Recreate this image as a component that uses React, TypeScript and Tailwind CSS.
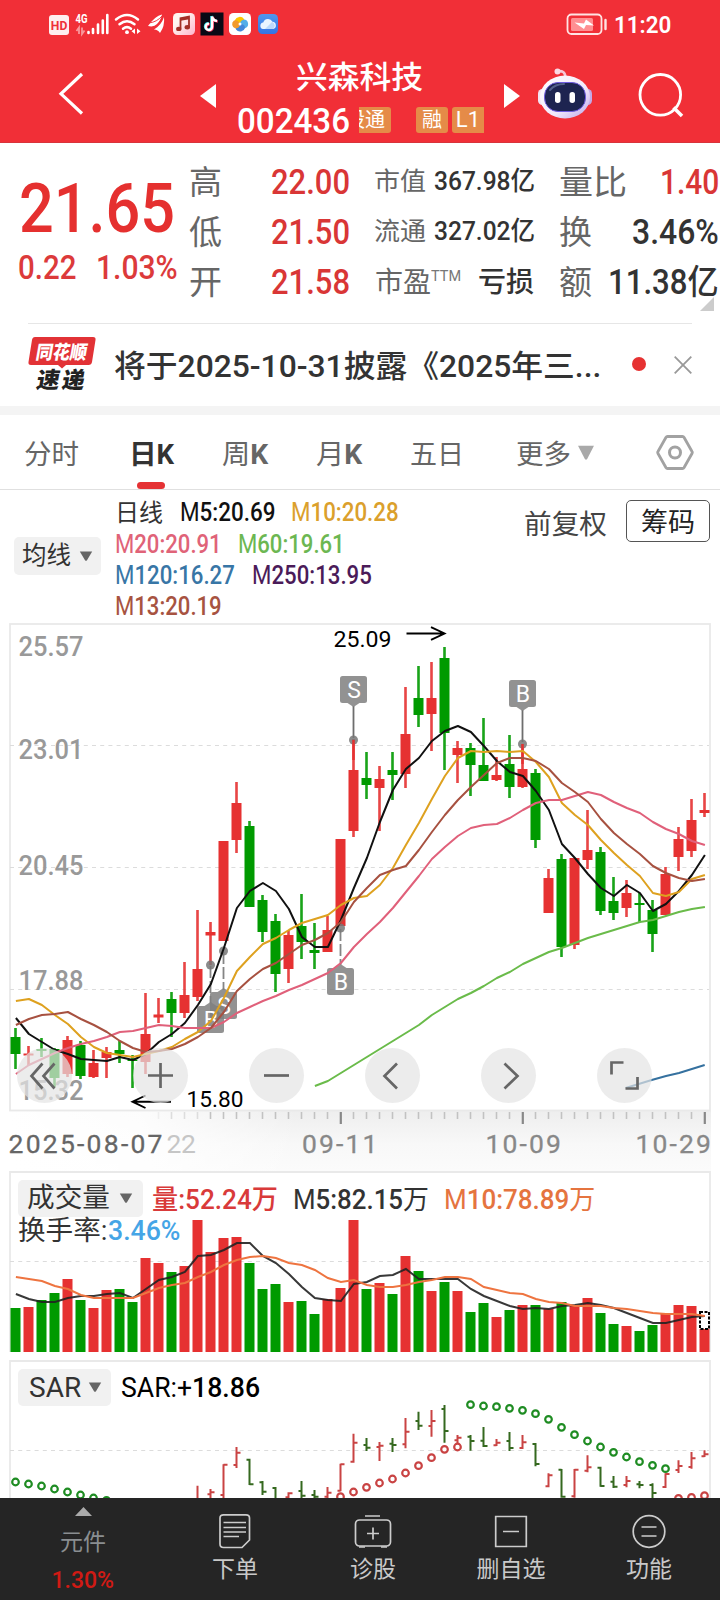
import { useLayoutEffect, useRef } from "react";
import type { ReactNode } from "react";
import clsx from "clsx";

/* ---------- text that keeps a fixed width, condensed like the DIN numerals ---------- */
function Fit({ w, className, children }: { w: number; className?: string; children: ReactNode }) {
  const inner = useRef<HTMLSpanElement>(null);
  useLayoutEffect(() => {
    const el = inner.current;
    if (el && el.offsetWidth > 0) el.style.transform = `scaleX(${w / el.offsetWidth})`;
  }, [w]);
  return (
    <span className={clsx("block shrink-0 whitespace-nowrap", className)} style={{ width: w }}>
      <span ref={inner} className="inline-block origin-left">{children}</span>
    </span>
  );
}

/* ---------- chart data (vertical chart coordinates) ---------- */
type Candle = ["r" | "g", number, number, number, number];
const candles: Candle[] = [
  ["g", 1028, 1037, 1054, 1069], ["r", 1046, 1053.5, 1055.5, 1065], ["g", 1038, 1049, 1051, 1057],
  ["g", 1048, 1049, 1078, 1087], ["r", 1036, 1040, 1074, 1077], ["g", 1041, 1045, 1076, 1079],
  ["r", 1050, 1063, 1077, 1078], ["r", 1047, 1052, 1058, 1078], ["g", 1041, 1050, 1054, 1063],
  ["g", 1055, 1059.5, 1061, 1088], ["r", 993, 1034, 1062, 1074], ["r", 998, 1014.5, 1017.5, 1023],
  ["g", 992, 999, 1013, 1037], ["r", 962, 995, 1013, 1018], ["r", 910, 969, 997, 1001],
  ["r", 922, 932, 935.5, 965], ["r", 841, 841, 941, 941], ["r", 782, 803, 840, 853],
  ["g", 821, 826, 907, 907], ["g", 895, 900, 932, 942], ["g", 914, 921, 974, 992],
  ["r", 930, 935, 969, 983], ["g", 894, 926, 942, 959], ["g", 923, 950, 953, 969],
  ["r", 916, 930, 952, 952], ["r", 839, 839, 926, 926], ["r", 739, 770, 831, 837],
  ["g", 752, 778, 785, 799], ["r", 766, 779, 788, 831], ["g", 752, 770, 775, 800],
  ["r", 687, 734, 774, 788], ["g", 666, 698, 715, 727], ["r", 662, 698, 714, 751],
  ["g", 647, 658, 733, 770], ["r", 741, 748, 755, 783], ["g", 743, 748, 765, 796],
  ["g", 718, 765, 781, 781], ["r", 757, 775, 780, 781], ["g", 735, 764, 787, 798],
  ["r", 744, 769, 787, 788], ["g", 769, 773, 840, 848], ["r", 869, 878, 913, 913],
  ["g", 854, 859, 947, 957], ["r", 858, 858, 945, 949], ["r", 810, 850, 860, 869],
  ["g", 847, 852, 911, 915], ["g", 877, 901, 913, 920], ["r", 880, 893, 908, 917],
  ["g", 893, 903, 905, 922], ["g", 900, 910, 934, 952], ["r", 867, 874, 915, 915],
  ["r", 827, 839, 857, 871], ["r", 799, 820, 851, 857], ["r", 793, 810, 813, 817],
];
const ma5 = [1018, 1034, 1042, 1050, 1054, 1059, 1060, 1061, 1057, 1060, 1054, 1042, 1034, 1023, 1005, 984, 948, 908, 891, 883, 891, 909, 937, 947, 947, 920, 888, 858, 822, 790, 769, 758, 741, 731, 726, 732, 746, 761, 772, 776, 791, 810, 844, 858, 874, 888, 896, 885, 893, 911, 904, 891, 875, 855];
const ma10 = [1001, 999, 1005, 1015, 1024, 1037, 1047, 1053, 1055, 1057, 1054, 1051, 1047, 1039, 1032, 1021, 998, 971, 957, 944, 938, 930, 923, 919, 915, 905, 898, 896, 885, 868, 845, 823, 799, 776, 758, 751, 752, 751, 752, 751, 762, 777, 803, 815, 825, 840, 853, 865, 876, 893, 896, 892, 879, 875];
const ma13 = [1025, 1019, 1015, 1014, 1012, 1019, 1025, 1032, 1041, 1048, 1052, 1051, 1049, 1044, 1037, 1028, 1012, 991, 979, 969, 963, 954, 945, 940, 933, 922, 902, 888, 875, 870, 866, 850, 832, 815, 800, 787, 775, 763, 758, 758, 761, 769, 783, 792, 802, 819, 833, 844, 854, 866, 873, 878, 881, 879];
const ma20 = [1074, 1065, 1059, 1053, 1048, 1044, 1041, 1037, 1032, 1031, 1028, 1025, 1026, 1028, 1028, 1028, 1022, 1013, 1007, 1001, 996, 990, 985, 979, 973, 963, 947, 934, 922, 908, 892, 876, 859, 847, 836, 828, 825, 824, 818, 810, 803, 800, 800, 796, 792, 795, 802, 808, 813, 822, 829, 834, 841, 845];
const ma60 = [1086, 1081, 1073, 1065, 1057, 1049, 1041, 1033, 1025, 1015, 1007, 999, 993, 986, 978, 972, 964, 958, 952, 948, 943, 938, 934, 930, 926, 922, 920, 916, 912, 909, 907];
const volume = [1308, 1307, 1300, 1293, 1279, 1300, 1308, 1290, 1289, 1302, 1258, 1263, 1272, 1266, 1220, 1252, 1238, 1237, 1263, 1289, 1284, 1302, 1301, 1314, 1299, 1288, 1220, 1289, 1283, 1294, 1256, 1271, 1291, 1282, 1291, 1312, 1303, 1317, 1310, 1305, 1305, 1309, 1302, 1305, 1298, 1313, 1324, 1326, 1331, 1325, 1313, 1305, 1306, 1329];
const volMa5 = [1294, 1299, 1302, 1302, 1298, 1296, 1296, 1294, 1293, 1298, 1289, 1280, 1277, 1272, 1256, 1255, 1250, 1243, 1243, 1256, 1263, 1274, 1287, 1298, 1300, 1301, 1284, 1282, 1276, 1275, 1269, 1279, 1279, 1279, 1279, 1289, 1296, 1301, 1306, 1309, 1308, 1309, 1306, 1305, 1303, 1305, 1308, 1313, 1318, 1323, 1323, 1320, 1317, 1316];
const volMa10 = [1277, 1279, 1281, 1286, 1289, 1295, 1298, 1298, 1298, 1298, 1293, 1288, 1285, 1283, 1277, 1272, 1265, 1260, 1257, 1256, 1258, 1263, 1265, 1270, 1278, 1282, 1280, 1285, 1287, 1287, 1285, 1282, 1280, 1277, 1277, 1279, 1287, 1290, 1293, 1294, 1299, 1302, 1303, 1306, 1306, 1306, 1308, 1309, 1311, 1313, 1314, 1314, 1314, 1316];

/* index, high, low, open, close: thirds of a pixel below 1165 */
const sarBars: [number, number, number, number, number][] = [
  [14, 962, 1010, 1006, 1006], [15, 972, 1010, 988, 982], [16, 898, 1010, 990, 899], [17, 846, 909, 900, 863],
  [18, 881, 960, 884, 958], [19, 948, 990, 952, 980], [20, 966, 1010, 969, 1006], [21, 982, 1010, 997, 985],
  [22, 948, 1010, 978, 992], [23, 975, 1010, 990, 995], [24, 966, 1010, 995, 983], [25, 896, 979, 977, 898],
  [26, 806, 893, 890, 833], [27, 819, 858, 840, 848], [28, 831, 888, 846, 842], [29, 819, 861, 836, 840],
  [30, 759, 850, 838, 800], [31, 740, 795, 768, 782], [32, 735, 815, 783, 768], [33, 720, 833, 732, 798],
  [34, 810, 850, 826, 818], [35, 810, 857, 815, 828], [36, 786, 846, 827, 843], [37, 822, 843, 841, 833],
  [38, 801, 858, 828, 849], [39, 810, 852, 849, 832], [40, 834, 904, 837, 897], [41, 925, 967, 964, 931],
  [42, 912, 998, 914, 995], [43, 912, 998, 994, 914], [44, 871, 922, 917, 907], [45, 905, 965, 908, 963],
  [46, 933, 969, 950, 965], [47, 933, 967, 960, 948], [48, 948, 970, 958, 960], [49, 955, 1000, 960, 984],
  [50, 925, 969, 966, 927], [51, 886, 924, 915, 903], [52, 861, 911, 906, 880], [53, 856, 876, 874, 868],
];
const sarGreen: [number, number][] = [[0, 951], [1, 957], [2, 963], [3, 972], [4, 981], [5, 990], [6, 999], [7, 1006], [35, 719], [36, 723], [37, 725], [38, 730], [39, 736], [40, 746], [41, 763], [42, 787], [43, 809], [44, 828], [45, 846], [46, 862], [47, 876], [48, 890], [49, 901], [50, 911]];
const sarRed: [number, number][] = [[25, 995], [26, 981], [27, 967], [28, 954], [29, 942], [30, 924], [31, 902], [32, 878], [33, 853], [34, 846], [51, 1000], [52, 997], [53, 992]];

const RED = "#e63131";
const GREEN = "#009a00";
const cx = (i: number) => 15.5 + i * 13;
const line = (ys: number[], from = 0) => ys.map((y, k) => `${cx(from + k) + 0.4},${y}`).join(" ");
const third = (v: number) => 1165 + v / 3;

function Caret({ className }: { className?: string }) {
  return (
    <svg className={clsx("shrink-0", className)} viewBox="0 0 14 10" preserveAspectRatio="none">
      <path d="M0.8 0.5h12.4L8 9.2Q7 10.4 6 9.2Z" fill="currentColor" />
    </svg>
  );
}

function Marker({ x, y, label, up }: { x: number; y: number; label: string; up?: boolean }) {
  return (
    <g>
      <path
        d={up ? `M${x - 6} ${y}L${x} ${y - 4}L${x + 6} ${y}Z` : `M${x - 6} ${y + 27}L${x} ${y + 31}L${x + 6} ${y + 27}Z`}
        fill="#7f7f7f" fillOpacity=".85"
      />
      <rect x={x - 13.5} y={y} width="27" height="27" rx="2.5" fill="#7f7f7f" fillOpacity=".85" />
      <text x={x + 0.5} y={y + 21.5} textAnchor="middle" fontSize="23" fill="#fff">{label}</text>
    </g>
  );
}

function StatusBar() {
  return (
    <div className="flex h-[47px] items-center">
      <svg className="ml-[48px] h-[47px] w-[240px]" viewBox="48 0 240 47">
        <rect x="49" y="15" width="20" height="20" rx="3" fill="#fff" fillOpacity=".92" />
        <text x="50.8" y="29.6" fontSize="13" fontWeight="700" fill="#ef3038" textLength="16.5" lengthAdjust="spacingAndGlyphs">HD</text>
        <text x="75.5" y="23.2" fontSize="12.5" fontWeight="700" fill="#fff" textLength="12" lengthAdjust="spacingAndGlyphs">4G</text>
        <path d="M79 34V27.500l-2.500 3.500M82 27.500v6.500l2.500-3.500" stroke="#fff" strokeOpacity=".5" strokeWidth="1.8" fill="none" />
        <path d="M88.5 33v-1M93 33v-4M98 33v-8.500M102.8 33v-12.500M107.3 33V15" stroke="#fff" strokeWidth="2.6" strokeLinecap="round" />
        <g fill="none" stroke="#fff" strokeWidth="2.5" strokeLinecap="round">
          <path d="M116 19.500Q127 10.500 138 19.500" />
          <path d="M119.500 24.300Q127 18.200 134.500 24.300" />
          <path d="M123 28.700Q127 25.600 131 28.700" />
        </g>
        <circle cx="127" cy="32.200" r="1.900" fill="#fff" />
        <path d="M135 28.500v5.500l-3.500-2.700zM137 28.500v5.500l3.500-2.700z" fill="#fff" />
        <path d="M162 14.500Q155 16 148 26Q154 27.500 157 24Q161 20 162 14.500ZM164 17Q161.500 25 154 29.500Q158 29.500 160 33Q165 26 164 17Z" fill="#fff" />
        <path d="M149 23q8-1 13-7M155 27q5-4 7-9" stroke="#ef3038" strokeWidth=".9" fill="none" />
        <defs>
          <linearGradient id="pinkish" x1="0" y1="0" x2="1" y2="1">
            <stop offset="0.3" stopColor="#fff5f0" /><stop offset="1" stopColor="#ffb5cb" />
          </linearGradient>
          <linearGradient id="sky" x1="0" y1="0" x2="0" y2="1">
            <stop offset="0" stopColor="#4f97ee" /><stop offset="1" stopColor="#3473e4" />
          </linearGradient>
        </defs>
        <rect x="173" y="13" width="22" height="22" rx="4.500" fill="url(#pinkish)" />
        <path d="M180.500 28.500V18.200l8.500-1.600v10.300" fill="none" stroke="#a32f26" strokeWidth="1.800" />
        <path d="M180.500 19.500l8.500-1.600" stroke="#a32f26" strokeWidth="2.600" />
        <ellipse cx="178.800" cy="28.900" rx="2.700" ry="2.200" fill="#a32f26" />
        <ellipse cx="187.300" cy="27.200" rx="2.700" ry="2.200" fill="#a32f26" />
        <rect x="200.500" y="12.500" width="23" height="23" fill="#090915" />
        <g fill="none" strokeWidth="2.400">
          <path d="M211.400 16v10.400a3.200 3.200 0 1 1-3-3.200M211.400 16c.7 3 2.500 4.300 5 4.500" stroke="#35dfe8" />
          <path d="M212.800 17v10.400a3.200 3.200 0 1 1-3-3.200M212.800 17c.7 3 2.500 4.300 5 4.500" stroke="#f5325a" />
          <path d="M212.100 16.400v10.400a3.200 3.200 0 1 1-3-3.200M212.100 16.400c.7 3 2.500 4.300 5 4.500" stroke="#fff" />
        </g>
        <rect x="229" y="13" width="22" height="22" rx="4.500" fill="#fff" />
        <path d="M235 20a5 4.500 0 0 1 9-1q1 3-2 5l-3 1q-5 0-4-5Z" fill="#fdc400" />
        <path d="M244.500 19.500a4.500 4.500 0 0 1 1 8.500q-3 1-5-2l-.5-2q0-4 4.500-4.500Z" fill="#54aee8" />
        <path d="M245 28a5 4.500 0 0 1-9 1.500q-1-3 2-5l2-.5q5 0 5 4Z" fill="#4387db" />
        <path d="M235.500 28.500a4.500 4.500 0 0 1-1.500-8q3-1 5 1.500l1 2q0 4-4.500 4.500Z" fill="#f29a2c" />
        <circle cx="240" cy="24" r="1.500" fill="#fff" />
        <rect x="258" y="14" width="20" height="20" rx="4.500" fill="url(#sky)" />
        <path d="M263 29a3.300 3.300 0 0 1 .2-6.500a5 5 0 0 1 9.300-.8a3.700 3.700 0 0 1 .5 7.300Z" fill="#eaf4ff" />
        <path d="M265 29l7-7a4 4 0 0 1 1 7Z" fill="#bcd9fb" />
      </svg>
      <svg className="ml-[277px] h-[47px] w-[46px]" viewBox="565 0 46 47">
        <rect x="567.500" y="14.500" width="34" height="19.500" rx="4" fill="none" stroke="#ffe3e3" strokeWidth="1.800" />
        <rect x="571" y="18" width="22" height="13" rx="1.500" fill="#ff8f92" />
        <path d="M574.500 22.500l9.500 1 2-4 8 6-8-.5-2 4Z" fill="#fff" />
        <path d="M605.500 20v9" stroke="#ffe3e3" strokeWidth="2.400" strokeLinecap="round" />
      </svg>
      <Fit w={57} className="ml-[3px] pt-[3px] text-[24px] leading-[44px] font-semibold text-white">11:20</Fit>
    </div>
  );
}

function Header() {
  return (
    <header className="h-[143px] border-b border-[#d8343b] bg-[#f12f37] text-white">
      <StatusBar />
      <div className="flex h-[95px]">
        <svg className="mt-[24px] ml-[57px] h-[46px] w-[30px]" viewBox="57 71 30 46">
          <path d="M82 74L61 93.800L82 113.500" fill="none" stroke="#fff" strokeWidth="3.200" />
        </svg>
        <svg className="mt-[37px] ml-[113px] h-[24px] w-[16px]" viewBox="0 0 16 24"><path d="M16 0v24L0 12Z" fill="#fff" /></svg>
        <div className="ml-[20px] flex w-[254px] flex-col">
          <Fit w={127} className="mt-[12px] ml-[60px] text-[31px] leading-[38px] font-medium">兴森科技</Fit>
          <div className="mt-[2px] flex h-[42px] items-center">
            <Fit w={113} className="mt-[2px] ml-[1px] text-[35.500px] leading-[40px] font-medium">002436</Fit>
            <div className="ml-[9px] flex h-[26px] w-[32px] justify-end overflow-hidden rounded-r-[3px] bg-[#e58b48] pr-[6px]">
              <span className="text-[20px] leading-[26px] whitespace-nowrap">股通</span>
            </div>
            <div className="ml-[25px] flex h-[26px] w-[32px] items-center justify-center rounded-[3px] bg-[#e58b48] text-[20px] leading-[26px]">融</div>
            <div className="ml-[4px] flex h-[26px] w-[32px] items-center justify-end rounded-l-[3px] bg-[#e58b48] pr-[4px] text-[22px] leading-[26px]">L1</div>
          </div>
        </div>
        <svg className="mt-[37px] ml-[14px] h-[24px] w-[16px]" viewBox="0 0 16 24"><path d="M0 0v24l16-12Z" fill="#fff" /></svg>
        <svg className="mt-[18px] ml-[16px] h-[58px] w-[60px]" viewBox="536 65 60 58">
          <defs>
            <linearGradient id="shell" x1="0" y1="0" x2="1" y2="1">
              <stop offset="0" stopColor="#ffffff" /><stop offset=".6" stopColor="#f2e9fb" /><stop offset="1" stopColor="#b9a2e8" />
            </linearGradient>
          </defs>
          <path d="M557 71.500q8-2 8.500 6" fill="none" stroke="#f6c6d6" strokeWidth="2.600" />
          <circle cx="557.500" cy="71.500" r="3" fill="#fbd9e4" />
          <rect x="538" y="89" width="9" height="16" rx="4.500" fill="#f3e3f3" />
          <rect x="583" y="89" width="9" height="16" rx="4.500" fill="#c4a9e6" />
          <ellipse cx="565" cy="97" rx="25" ry="21.500" fill="url(#shell)" />
          <rect x="544.500" y="82.500" width="41" height="29" rx="13.500" fill="#1d2450" stroke="#6d5be0" strokeWidth="1" />
          <path d="M550 90q5-6 14-6" stroke="#53608a" strokeWidth="2" fill="none" strokeLinecap="round" />
          <rect x="555" y="92" width="5.500" height="11" rx="2.700" fill="#fff" />
          <rect x="569.500" y="92" width="5.500" height="11" rx="2.700" fill="#fff" />
        </svg>
        <svg className="mt-[24px] ml-[40px] h-[50px] w-[52px]" viewBox="636 71 52 50">
          <circle cx="660.300" cy="94.800" r="20.300" fill="none" stroke="#fff" strokeWidth="2.800" />
          <path d="M673.500 107.500l8.500 8.500" stroke="#fff" strokeWidth="3.600" />
        </svg>
      </div>
    </header>
  );
}

const rowCls = "flex h-[50px] leading-[50px]";

function Quote() {
  return (
    <section className="relative flex h-[180px] pt-[14px] text-[#333]">
      <div className="w-[189px]">
        <Fit w={156} className="mt-[-1px] ml-[19px] text-[69px] leading-[106px] font-medium text-[#e5302f]">21.65</Fit>
        <div className="mt-[-19px] flex text-[33px] leading-[50px] text-[#dc3a3b]">
          <Fit w={58} className="ml-[18px] font-medium">0.22</Fit>
          <Fit w={82} className="ml-[20px] font-medium">1.03%</Fit>
        </div>
      </div>
      <div className="w-[186px]">
        {[["高", "22.00"], ["低", "21.50"], ["开", "21.58"]].map(([k, v]) => (
          <div key={k} className={rowCls}>
            <span className="mt-px text-[33px] text-[#666]">{k}</span>
            <Fit w={79} className="ml-[49px] text-[34.500px] font-medium text-[#d93636]">{v}</Fit>
          </div>
        ))}
      </div>
      <div className="w-[184px]">
        {[["市值", "367.98亿"], ["流通", "327.02亿"]].map(([k, v]) => (
          <div key={k} className={rowCls}>
            <Fit w={52} className="mt-[-1px] ml-[-1px] text-[25.500px] text-[#666]">{k}</Fit>
            <Fit w={101} className="mt-[-1px] ml-[8px] text-[26px] font-medium">{v}</Fit>
          </div>
        ))}
        <div className={rowCls}>
          <span className="mt-px text-[28px] text-[#666]">市盈</span>
          <Fit w={30} className="mt-[-6px] text-[15px] text-[#777]">TTM</Fit>
          <span className="mt-px ml-[17px] text-[28px] font-medium">亏损</span>
        </div>
      </div>
      <div className="w-[160px]">
        <div className={clsx(rowCls, "justify-between")}>
          <Fit w={68} className="mt-px text-[33.500px] text-[#666]">量比</Fit>
          <Fit w={59} className="text-[34.500px] font-medium text-[#d93636]">1.40</Fit>
        </div>
        <div className={clsx(rowCls, "justify-between")}>
          <span className="mt-px text-[33px] text-[#666]">换</span>
          <Fit w={87} className="text-[34.500px] font-medium">3.46%</Fit>
        </div>
        <div className={clsx(rowCls, "justify-between")}>
          <span className="mt-px text-[33px] text-[#666]">额</span>
          <Fit w={111} className="text-[34.500px] font-medium">11.38亿</Fit>
        </div>
      </div>
      <svg className="absolute top-[154px] left-[700px] h-[14px] w-[14px]" viewBox="0 0 14 14"><path d="M14 0v14H0Z" fill="#ccc" /></svg>
    </section>
  );
}

function News() {
  return (
    <section className="flex h-[92px] flex-col border-b-[9px] border-[#f4f4f4]">
      <div className="mx-[28px] h-px bg-[#e6e6e6]" />
      <div className="flex h-[82px]">
        <svg className="mt-[12px] ml-[27px] h-[58px] w-[70px]" viewBox="27 336 70 58">
          <path d="M35 337H93q3 0 2.500 3L92 362q-.5 3-3.500 3H66l-4 3.500L58 365H31q-3 0-2.500-3L32 340q.5-3 3-3Z" fill="#e23236" />
          <g transform="translate(0 358) skewX(-10)" fontWeight="900">
            <text x="35" y="0.500" fontSize="19" fill="#fff" textLength="51" lengthAdjust="spacingAndGlyphs">同花顺</text>
            <text x="41" y="30.500" fontSize="22.500" fill="#222" textLength="23" lengthAdjust="spacingAndGlyphs">速</text>
            <text x="66.500" y="30.500" fontSize="22.500" fill="#222" textLength="22.500" lengthAdjust="spacingAndGlyphs">递</text>
          </g>
        </svg>
        <Fit w={487} className="ml-[17px] text-[31px] leading-[86px] font-medium text-[#333]">将于2025-10-31披露《2025年三...</Fit>
        <span className="mt-[33px] ml-[31px] size-[14px] rounded-full bg-[#e63232]" />
        <svg className="mt-[32px] ml-[28px] size-[18px]" viewBox="0 0 18 18"><path d="M.7.700l16.600 16.600M17.300.700L.7 17.300" stroke="#999" strokeWidth="1.800" /></svg>
      </div>
    </section>
  );
}

function Tabs() {
  return (
    <nav className="flex h-[75px] border-b border-[#e0e0e0] text-[27px] leading-[80px] text-[#666]">
      <Fit w={55} className="ml-[24px]">分时</Fit>
      <div className="ml-[49px] flex w-[46px] flex-col items-center font-bold text-[#333]">
        <Fit w={45} className="h-[67px]">日K</Fit>
        <span className="h-[7px] w-[28px] shrink-0 rounded-full bg-[#e53234]" />
      </div>
      <Fit w={46} className="ml-[48px]">周<b>K</b></Fit>
      <Fit w={46} className="ml-[48px]">月<b>K</b></Fit>
      <Fit w={54} className="ml-[48px]">五日</Fit>
      <Fit w={55} className="ml-[52px]">更多</Fit>
      <Caret className="mt-[30px] ml-[6px] h-[15px] w-[18px] text-[#a9a9a9]" />
      <svg className="mt-[19px] ml-[61px] h-[37px] w-[38px]" viewBox="0 0 38 37">
        <path d="M11.500 2.500h15q1 0 1.600 1L36 17.500q.6 1 0 2L28.100 33.500q-.6 1-1.600 1h-15q-1 0-1.600-1L2 19.500q-.6-1 0-2L9.900 3.500q.6-1 1.600-1Z" fill="none" stroke="#a2a2a2" strokeWidth="2.800" />
        <circle cx="19" cy="18.500" r="5.500" fill="none" stroke="#a2a2a2" strokeWidth="3" />
      </svg>
    </nav>
  );
}

function Ma({ w, n, v, className }: { w: number; n: string; v: string; className: string }) {
  return <Fit w={w} className={className}>M<span className="font-medium">{n}:{v}</span></Fit>;
}

function Legend() {
  return (
    <section className="flex h-[133px] text-[#333]">
      <div className="mt-[47px] ml-[14px] flex h-[38px] w-[87px] items-center rounded-[5px] bg-[#f1f1f1] pl-[8px]">
        <Fit w={49} className="text-[24.500px] leading-[40px]">均线</Fit>
        <Caret className="ml-[8px] h-[10px] w-[14px] text-[#666]" />
      </div>
      <div className="mt-[7px] ml-[14px] w-[400px] text-[25px] leading-[31px]">
        <div className="flex">
          <Fit w={48} className="text-[24px] leading-[32px]">日线</Fit>
          <Ma w={95} n="5" v="20.69" className="ml-[17px] text-[#111]" />
          <Ma w={108} n="10" v="20.28" className="ml-[16px] text-[#dba02c]" />
        </div>
        <div className="flex">
          <Ma w={107} n="20" v="20.91" className="text-[#e06378]" />
          <Ma w={107} n="60" v="19.61" className="ml-[16px] text-[#6cb752]" />
        </div>
        <div className="flex">
          <Ma w={120} n="120" v="16.27" className="text-[#3876a6]" />
          <Ma w={120} n="250" v="13.95" className="ml-[17px] text-[#4b1b59]" />
        </div>
        <div className="flex">
          <Ma w={107} n="13" v="20.19" className="text-[#a75341]" />
        </div>
      </div>
      <Fit w={83} className="ml-[9px] text-[27px] leading-[71px] text-[#444]">前复权</Fit>
      <div className="mt-[10px] ml-[19px] flex h-[42px] w-[84px] shrink-0 items-center justify-center rounded-[5px] border border-[#555] text-[27px] leading-[40px] text-[#222]">
        <span className="mt-[3px]">筹码</span>
      </div>
    </section>
  );
}

const controls: { d: string; name: string }[] = [
  { name: "first", d: "M-2 -12L-13 0.500L-2 13M10 -12L-1 0.500L10 13" },
  { name: "zoom in", d: "M-12.500 0H12.500M0 -12.500V12.500" },
  { name: "zoom out", d: "M-12.500 0H12.500" },
  { name: "previous", d: "M4.500 -12L-8 0.500L4.500 13" },
  { name: "next", d: "M-4 -12L9 0.500L-4 13" },
  { name: "fullscreen", d: "M-13 -1V-13H-1M1 13H13V1.500" },
];

function PriceChart() {
  return (
    <section className="relative h-[548px]">
      <svg className="block h-[548px] w-[720px]" viewBox="0 623 720 548">
        <defs>
          <linearGradient id="shade" x1="0" y1="0" x2="0" y2="1">
            <stop offset="0" stopColor="#eeeeee" /><stop offset=".55" stopColor="#f8f8f8" /><stop offset="1" stopColor="#fbfbfb" />
          </linearGradient>
          <linearGradient id="veil" x1="0" y1="0" x2="1" y2="0">
            <stop offset="0" stopColor="#fff" /><stop offset=".45" stopColor="#fff" stopOpacity=".85" /><stop offset="1" stopColor="#fff" stopOpacity="0" />
          </linearGradient>
        </defs>
        <rect x="10" y="1111" width="701" height="60" fill="url(#shade)" />
        <rect x="9" y="1111" width="290" height="60" fill="url(#veil)" />
        <rect x="10" y="624" width="700" height="486.500" fill="#fff" stroke="#e9e9e9" strokeWidth="1.800" />
        <path d="M10 745.500H709M10 867.500H709M10 989.500H709" stroke="#dcdcdc" strokeWidth="1.200" strokeDasharray="4 4.200" />
        <g fill="#999" fontSize="27" fontWeight="500">
          {[["25.57", 655.700], ["23.01", 758.500], ["20.45", 874.500], ["17.88", 989.800], ["15.32", 1099.500]].map(([t, y]) => (
            <text key={t} x="18.500" y={y} textLength="65" lengthAdjust="spacingAndGlyphs">{t}</text>
          ))}
        </g>
        {candles.map(([c, hi, top, bot, lo], i) => (
          <g key={i} fill={c === "r" ? RED : GREEN}>
            <rect x={cx(i) - 1.300} y={hi} width="2.600" height={lo - hi} opacity=".9" />
            <rect x={cx(i) - 5} y={top} width="10" height={bot - top} />
          </g>
        ))}
        <g stroke="#6e6e6e" strokeWidth="1.800">
          <path d="M353.500 706V738M522.500 710V742" />
          <path d="M210.500 966V1003M223.500 952V990M340.500 929V965" stroke="#858585" strokeDasharray="12 3" />
        </g>
        <g fill="#777" fillOpacity=".85">
          <circle cx="353.500" cy="740" r="4.500" /><circle cx="522.500" cy="744" r="4.500" />
          <circle cx="210.500" cy="965" r="4.500" /><circle cx="223.500" cy="951" r="4.500" /><circle cx="340.500" cy="928" r="4.500" />
        </g>
        <rect x="352.300" y="740" width="2.400" height="20" fill={RED} />
        <rect x="521.300" y="744" width="2.400" height="20" fill={RED} />
        <Marker x={353.500} y={676} label="S" />
        <Marker x={522.500} y={680} label="B" />
        <Marker x={223.500} y={992} label="S" up />
        <Marker x={210.500} y={1006} label="B" up />
        <Marker x={340.500} y={968} label="B" up />
        <g fill="none" strokeWidth="2" strokeLinejoin="round">
          <polyline points={line(ma5)} stroke="#111" />
          <polyline points={line(ma10)} stroke="#dea11f" />
          <polyline points={line(ma20)} stroke="#e0607a" />
          <polyline points={line(ma60, 23)} stroke="#6abb4a" />
          <polyline points="625.700,1088 651.700,1080 666,1076 679,1073 704.700,1065" stroke="#35719f" />
          <polyline points={line(ma13)} stroke="#a75140" />
        </g>
        <g fontSize="22.500" fill="#000">
          <text x="333.500" y="647" textLength="58" lengthAdjust="spacingAndGlyphs">25.09</text>
          <text x="186.500" y="1107" textLength="57" lengthAdjust="spacingAndGlyphs">15.80</text>
        </g>
        <path d="M406.500 633.500H444M431 627.200L444.500 633.500L431 639.800M171 1101.700H133M145.500 1095.500L132.500 1101.700L145.500 1108" fill="none" stroke="#000" strokeWidth="1.900" />
        {candles.map((_, i) => {
          const major = i === 25 || i === 39 || i === 53;
          return i < 11 ? null : (
            <rect key={i} x={cx(i) - 0.800} y="1112" width={major ? 2.200 : 1.600} height={major ? 12 : 7} fill={major ? "#888" : i === 11 ? "#eee" : i < 15 ? "#ddd" : "#c2c2c2"} />
          );
        })}
        <g fontSize="26.500" fill="#888" stroke="#888" strokeWidth=".3">
          <text x="8.500" y="1153" fill="#666" stroke="#666" textLength="154">2025-08-07</text>
          <text x="166.500" y="1153" fill="#c6c6c6" stroke="none" textLength="29.500">22</text>
          <text x="302" y="1153" textLength="75.500">09-11</text>
          <text x="485.500" y="1153" textLength="75.500">10-09</text>
          <text x="635.500" y="1153" textLength="75.500">10-29</text>
        </g>
      </svg>
      <div className="absolute top-[425px] left-[17px] flex gap-[61px]">
        {controls.map((c) => (
          <button key={c.name} aria-label={c.name} className="size-[55px] rounded-full bg-[#e4e4e4]/70">
            <svg className="size-[55px]" viewBox="-27.500 -27.500 55 55"><path d={c.d} fill="none" stroke="#666" strokeWidth="2.700" /></svg>
          </button>
        ))}
      </div>
    </section>
  );
}

function VolumeChart() {
  return (
    <section className="relative h-[189px] text-[27px] text-[#333]">
      <svg className="block h-[189px] w-[720px]" viewBox="0 1171 720 189">
        <path d="M10 1352V1172H710V1352" fill="none" stroke="#e9e9e9" strokeWidth="1.800" />
        <path d="M10 1261.500H709" stroke="#dcdcdc" strokeWidth="1.200" strokeDasharray="4 4.200" />
        {volume.map((y, i) => (
          <rect key={i} x={cx(i) - 5} y={y} width="10" height={1352 - y} fill={candles[i][0] === "r" ? RED : GREEN} />
        ))}
        <rect x="700" y="1312" width="9" height="17" fill="#fff" stroke="#000" strokeWidth="2" strokeDasharray="3 1.500" />
        <polyline points={line(volMa5)} fill="none" stroke="#222" strokeOpacity=".9" strokeWidth="2" />
        <polyline points={line(volMa10)} fill="none" stroke="#ee7440" strokeWidth="2" />
      </svg>
      <div className="absolute top-[9px] left-[18px] flex h-[37px] leading-[41px]">
        <div className="flex w-[125px] items-center rounded-[5px] bg-[#f1f1f1] pl-[9px]">
          <Fit w={83}>成交量</Fit>
          <Caret className="mt-[-2px] ml-[9px] h-[10px] w-[14px] text-[#666]" />
        </div>
        <Fit w={126} className="ml-[9px] font-medium text-[#d93a3a]">量:52.24万</Fit>
        <Fit w={136} className="ml-[15px]">M<span className="font-medium">5:82.15</span>万</Fit>
        <Fit w={151} className="ml-[15px] text-[#e5743f]">M<span className="font-medium">10:78.89</span>万</Fit>
      </div>
      <div className="absolute top-[41px] left-[18px] flex leading-[39px]">
        <Fit w={90}>换手率:</Fit>
        <Fit w={72} className="font-medium text-[#45a5e6]">3.46%</Fit>
      </div>
    </section>
  );
}

function SarChart() {
  return (
    <section className="relative h-[138px]">
      <svg className="block h-[138px] w-[720px]" viewBox="0 1360 720 138">
        <path d="M10 1500V1361H710V1500" fill="none" stroke="#e9e9e9" strokeWidth="1.800" />
        <path d="M10 1450.500H709" stroke="#dcdcdc" strokeWidth="1.200" strokeDasharray="4 4.200" />
        {sarBars.map(([i, hi, lo, open, close]) => (
          <path
            key={i}
            d={`M${cx(i)} ${third(hi)}V${third(lo)}M${cx(i) - 3} ${third(open)}H${cx(i)}M${cx(i)} ${third(close)}H${cx(i) + 4}`}
            stroke={candles[i][0] === "r" ? "#c94343" : "#35691f"} strokeWidth="2"
          />
        ))}
        <g fill="#fff" strokeWidth="2.200">
          {sarGreen.map(([i, y]) => <circle key={i} cx={cx(i)} cy={third(y)} r="3.300" stroke="#1e8c22" />)}
          {sarRed.map(([i, y]) => <circle key={i} cx={cx(i)} cy={third(y)} r="3.300" stroke="#c94343" />)}
        </g>
      </svg>
      <div className="absolute top-[9px] left-[18px] flex h-[37px] text-[28px] leading-[39px]">
        <div className="flex w-[93px] items-center rounded-[5px] bg-[#f1f1f1] pl-[11px] text-[#333]">
          <Fit w={52}>SAR</Fit>
          <Caret className="mt-[-2px] ml-[7px] h-[10px] w-[14px] text-[#666]" />
        </div>
        <Fit w={139} className="ml-[10px] text-[27px] text-black">SAR:+<span className="font-medium">18.86</span></Fit>
      </div>
    </section>
  );
}

function NavItem({ label, w, children }: { label: string; w: number; children: ReactNode }) {
  return (
    <div className="flex flex-1 flex-col items-center">
      <svg className="mt-[14px] h-[38px] w-[40px]" viewBox="-20 0 40 38" fill="none" stroke="#ccc" strokeWidth="1.700">{children}</svg>
      <Fit w={w} className="mt-[2px] text-[23px] leading-[36px] text-[#c9c9c9]">{label}</Fit>
    </div>
  );
}

function BottomNav() {
  return (
    <footer className="flex h-[102px] bg-[#252525]">
      <div className="flex w-[166px] flex-col items-center">
        <svg className="mt-[9px] h-[9px] w-[17px]" viewBox="0 0 17 9"><path d="M8.500 0L17 9H0Z" fill="#aaa" /></svg>
        <Fit w={46} className="mt-[10px] text-[22.500px] leading-[32px] text-[#8a8e91]">元件</Fit>
        <Fit w={63} className="mt-[7px] text-[23px] leading-[32px] font-medium text-[#d01a14]">1.30%</Fit>
      </div>
      <div className="flex w-[552px]">
        <NavItem label="下单" w={46}>
          <path d="M-11.500 2.800H11Q14.500 2.800 14.500 6V28L7 35.500H-11.500Q-15 35.500-15 32V6Q-15 2.800-11.500 2.800ZM-11.500 10.500H11M-11.500 15.500H11M-11.500 20H11M-11.500 24.500H4" />
        </NavItem>
        <NavItem label="诊股" w={46}>
          <rect x="-17.500" y="8" width="35" height="26" rx="4" />
          <path d="M-8 4H7M-14 35H-8M8 35H14M-6 21.500H6M0 15.500V27.500" />
        </NavItem>
        <NavItem label="删自选" w={69}>
          <path d="M-15.300 4.500H15.300V34.500H-15.300ZM-8 19.500H8" />
        </NavItem>
        <NavItem label="功能" w={46}>
          <circle cx="0" cy="19.500" r="15.800" />
          <path d="M-7.500 15H7.500M-7.500 24H7.500" />
        </NavItem>
      </div>
    </footer>
  );
}

export default function App() {
  return (
    <main className="flex h-[1600px] w-[720px] flex-col overflow-hidden bg-white font-[Roboto,'Noto_Sans_CJK_SC',sans-serif]">
      <Header />
      <Quote />
      <News />
      <Tabs />
      <Legend />
      <PriceChart />
      <VolumeChart />
      <SarChart />
      <BottomNav />
    </main>
  );
}
